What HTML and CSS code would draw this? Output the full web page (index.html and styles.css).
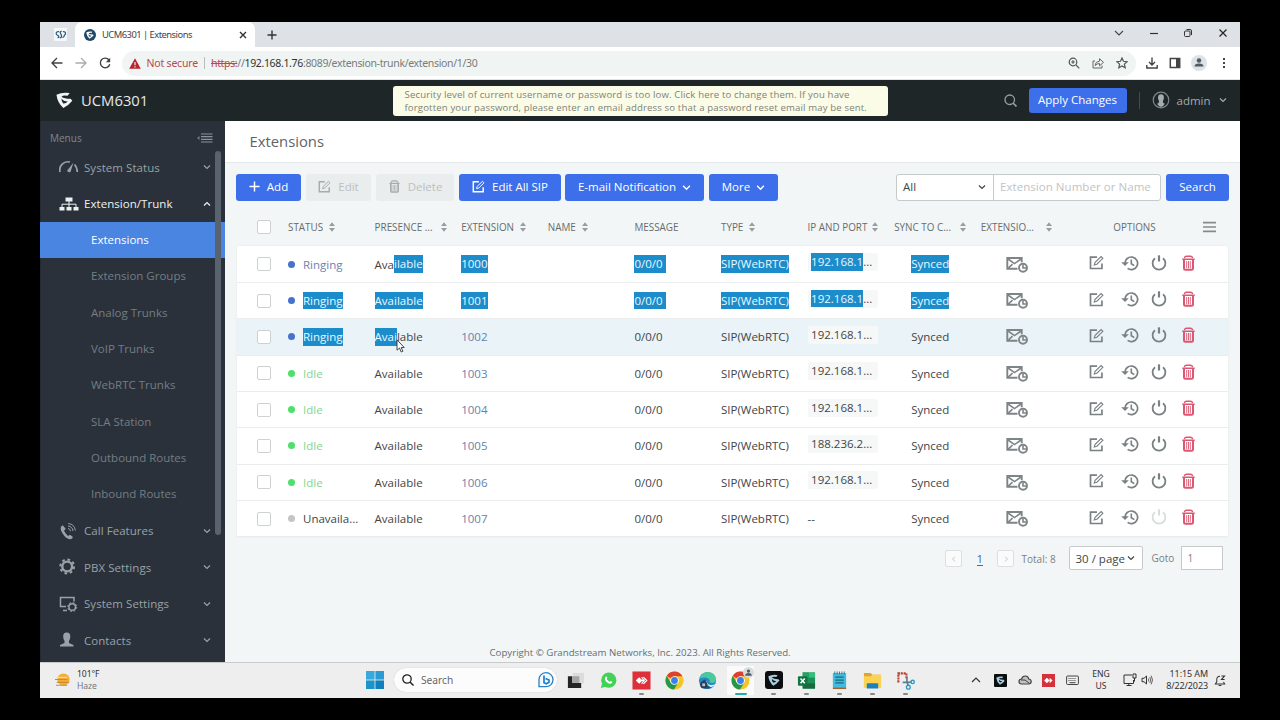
FILE: index.html
```html
<!DOCTYPE html>
<html lang="en">
<head>
<meta charset="utf-8">
<title>UCM6301 | Extensions</title>
<link rel="stylesheet" href="styles.css">
</head>
<body>
<svg class="defs" width="0" height="0">
  <symbol id="edit" viewBox="0 0 16 16"><path d="M8.500 2.200H1.600v12.200h12.200V9" fill="none" stroke="currentColor" stroke-width="1.800"/><path d="M5.600 10.600l.9-2.800 6.400-6.200 1.900 1.900-6.400 6.300z" fill="none" stroke="currentColor" stroke-width="1.200"/></symbol>
  <symbol id="history" viewBox="0 0 18 16"><path d="M4 8.500A6.300 6.300 0 1 1 6.600 13.400" fill="none" stroke="currentColor" stroke-width="1.700"/><path d="M.2 7.300h7.600L4 11z" fill="currentColor"/><path d="M10.300 4.500v4.200l3 2" fill="none" stroke="currentColor" stroke-width="1.600"/></symbol>
  <symbol id="power" viewBox="0 0 16 16"><path d="M4 3.200a6.400 6.400 0 1 0 8 0" fill="none" stroke="currentColor" stroke-width="1.800"/><path d="M8 .3v6.200" stroke="currentColor" stroke-width="2.200"/></symbol>
  <symbol id="trash" viewBox="0 0 13 16"><path d="M.3 4.200h12.400M2.300 3Q3 1.200 4.500 1.200h4Q10 1.200 10.700 3" fill="none" stroke="currentColor" stroke-width="1.500"/><path d="M2 4.500v8.900q0 1.400 1.400 1.400h6.200q1.400 0 1.400-1.400V4.500" fill="none" stroke="currentColor" stroke-width="2"/><path d="M4.700 6v7.300M6.500 6v7.300M8.300 6v7.300" stroke="currentColor" stroke-width=".9"/></symbol>
  <symbol id="mail" viewBox="0 0 22 17"><path d="M11.500 12.800H1.300V2h14.400v4.200" fill="none" stroke="currentColor" stroke-width="1.900"/><path d="M2 3l6.500 4.600L15 3M2 12.300l4.500-4.200" fill="none" stroke="currentColor" stroke-width="1.600"/><circle cx="17" cy="11.800" r="4" fill="none" stroke="currentColor" stroke-width="1.900"/><path d="M17 8.500v3.500h3.300" fill="none" stroke="currentColor" stroke-width="1.600"/></symbol>
  <symbol id="sort" viewBox="0 0 6 10"><path d="M3 .2L6 4H0zM3 9.800L0 6h6z" fill="currentColor"/></symbol>
  <symbol id="down" viewBox="0 0 8 8"><path d="M1 2.500l3 3 3-3" fill="none" stroke="currentColor" stroke-width="1.200"/></symbol>
  <symbol id="gs" viewBox="0 0 18 18"><path fill-rule="evenodd" d="M.5 3.500Q7 .2 14.500 1.700L12.300 4.500Q7.500 3.500 5.800 5.500Q9 7.800 15.500 7.700L17.300 9.800Q12.500 15.500 7.800 17.600Q1.500 12 .5 3.500zM5.800 7.500Q8 10.800 12.500 10.700Q10 13.200 7.700 12.700Q5.500 10.500 5.800 7.500z" fill="currentColor"/></symbol>
  <symbol id="chrome" viewBox="0 0 20 20"><circle cx="10" cy="10" r="9.500" fill="#f5c528"/><path d="M10 10L1.800 5.200A9.500 9.500 0 0 1 18.300 5.500H10z" fill="#dd4132"/><path d="M1.800 5.200A9.500 9.500 0 0 0 9.500 19.500L14 12 6 12z" fill="#24964d"/><circle cx="10" cy="10" r="4.600" fill="#fff"/><circle cx="10" cy="10" r="3.600" fill="#3f7fe8"/></symbol>
</svg>
<div class="desktop">
  <div class="tabs">
    <svg class="pinned" viewBox="0 0 14 14"><rect width="14" height="14" fill="#f4f8fb"/><path d="M5.500 3.800H4.300a2 2 0 0 0-1 3.700l1.400.8q1.300 1.500-1 2.200M8.300 3.300q-2.300.5-1.300 2.400l1 2.200q.6 2.300-1.800 2.600M9.500 3.800h1a2 2 0 0 1 .8 3.800q-.4 2.400-2.300 2.800" fill="none" stroke="#34607f" stroke-width="1.400"/></svg>
    <div class="tab"><span class="fav"><svg viewBox="0 0 18 18"><use href="#gs"/></svg></span><span class="tabname">UCM6301 | Extensions</span><svg class="x" viewBox="0 0 8 8"><path d="M1 1l6 6M7 1L1 7" stroke="#333" stroke-width="1.400"/></svg></div>
    <svg class="plus" viewBox="0 0 10 10"><path d="M5 .5v9M.5 5h9" stroke="#333" stroke-width="1.400"/></svg>
    <div class="win">
      <svg viewBox="0 0 10 10"><path d="M1 3l4 4 4-4" fill="none" stroke="#444" stroke-width="1.100"/></svg>
      <svg viewBox="0 0 10 10"><path d="M1 5.500h8" stroke="#333" stroke-width="1.200"/></svg>
      <svg viewBox="0 0 10 10"><rect x="1.500" y="3" width="5.500" height="5.500" rx="1" fill="none" stroke="#333"/><path d="M3.500 1.500H7q1.500 0 1.500 1.500v4" fill="none" stroke="#333"/></svg>
      <svg viewBox="0 0 10 10"><path d="M1.500 1.500l7 7M8.500 1.500l-7 7" stroke="#222" stroke-width="1.200"/></svg>
    </div>
  </div>
  <div class="nav">
    <svg class="arrow" viewBox="0 0 12 12"><path d="M11.500 6H1.300M6 1L1 6l5 5" fill="none" stroke="#444" stroke-width="1.400"/></svg>
    <svg class="arrow" viewBox="0 0 12 12"><path d="M.5 6h10.200M6 1l5 5-5 5" fill="none" stroke="#a9acad" stroke-width="1.300"/></svg>
    <svg class="arrow" viewBox="0 0 12 12"><path d="M10 3A4.800 4.800 0 1 0 10.800 7.200" fill="none" stroke="#444" stroke-width="1.400"/><path d="M11.200.8v4.400H6.800z" fill="#444"/></svg>
    <div class="omnibox">
      <svg class="warn" viewBox="0 0 12 11"><path d="M6 .3L11.800 10.700H.2z" fill="#b9252c"/><path d="M6 4v3.300M6 8.200v1.300" stroke="#fff" stroke-width="1.100"/></svg>
      <span class="notsec">Not secure</span><i class="bar"></i>
      <span class="url"><s>https:</s>//<b>192.168.1.76</b>:8089/extension-trunk/extension/1/30</span>
      <div class="omniicons">
        <svg viewBox="0 0 12 12"><circle cx="5" cy="5" r="3.800" fill="none" stroke="#555" stroke-width="1.200"/><path d="M8 8l3.300 3.300M3.200 5h3.600M5 3.200v3.600" stroke="#555" stroke-width="1.200"/></svg>
        <svg viewBox="0 0 12 12"><path d="M3 4H1v7h9V8.500M3 8.500Q3.300 4.500 7.500 4.200V1.700l4 3.700-4 3.400V6.500Q5 6.500 3 8.500z" fill="none" stroke="#666"/></svg>
        <svg viewBox="0 0 12 12"><path d="M6 1l1.500 3.300 3.600.4-2.700 2.400.8 3.600L6 8.900l-3.200 1.800.8-3.600L.9 4.700l3.600-.4z" fill="none" stroke="#555" stroke-width="1.200"/></svg>
      </div>
    </div>
    <div class="navright">
      <svg viewBox="0 0 12 12"><path d="M6 .5v7M3 5l3 3 3-3M.8 8v3h10.400V8" fill="none" stroke="#444" stroke-width="1.400"/></svg>
      <svg viewBox="0 0 12 12"><path d="M1.300 1.500h9.400v9H1.300z" fill="none" stroke="#444" stroke-width="1.500"/><path d="M7 1h4v10H7z" fill="#444"/></svg>
      <svg class="user" viewBox="0 0 16 16"><circle cx="8" cy="8" r="8" fill="#dde2e5"/><circle cx="8" cy="5.500" r="2.200" fill="#505b62"/><path d="M3.500 11.500q0-3 4.500-3t4.500 3z" fill="#505b62"/></svg>
      <svg viewBox="0 0 12 12"><path d="M5 1h2v2H5zM5 5h2v2H5zM5 9h2v2H5z" fill="#444"/></svg>
    </div>
  </div>
  <header class="top">
    <svg class="logo"><use href="#gs"/></svg><span class="brand">UCM6301</span>
    <div class="notice"><div>Security level of current username or password is too low. Click here to change them. If you have</div><div>forgotten your password, please enter an email address so that a password reset email may be sent.</div></div>
    <svg class="find" viewBox="0 0 12 12"><circle cx="5.300" cy="5.300" r="4.400" fill="none" stroke="#9a9fa0" stroke-width="1.200"/><path d="M8.500 8.500l3 3" stroke="#9a9fa0" stroke-width="1.500"/></svg>
    <button class="btn apply">Apply Changes</button><i class="split"></i>
    <svg class="avatar" viewBox="0 0 18 18"><circle cx="9" cy="9" r="7.800" fill="none" stroke="#7d868b" stroke-width="1.200"/><path d="M9 3.300q3 0 2.900 3.400 0 1.800-1 3l.3 2.300 1.600.8Q11 16 9 16t-4-3.200l1.700-.8.300-2.300q-1-1.200-1-3Q6 3.300 9 3.300z" fill="#a4adb2"/></svg>
    <span class="admin">admin</span><svg class="chev"><use href="#down"/></svg>
  </header>
  <div class="app">
    <aside>
      <div class="menus"><span>Menus</span><svg viewBox="0 0 16 10"><path d="M4 1h11.500M4 3.600h11.500M4 6.300h11.500M4 9h11.500" stroke="#8a959b" stroke-width="1.200"/><path d="M0 5l2.500-2v4z" fill="#5d86a8"/></svg></div>
      <div class="item"><svg viewBox="0 0 20 16"><path d="M1 13A8.300 8.300 0 0 1 11 3M15.500 5.500q2.500 2.500 2.800 7.500" fill="none" stroke="currentColor" stroke-width="1.700"/><path d="M14.500 3.500L11.500 13q-3 1-3.300-1.500z" fill="currentColor"/></svg><span>System Status</span><svg class="chev"><use href="#down"/></svg></div>
      <div class="item open"><svg viewBox="0 0 20 16"><path d="M6.500 1.500h7v4h-7zM.5 11h5v3.500h-5zM7.500 11h5v3.500h-5zM14.500 11h5v3.500h-5z" fill="currentColor"/><path d="M10 5v6M3 11V8.200h14V11" fill="none" stroke="currentColor"/></svg><span>Extension/Trunk</span><svg class="chev up"><use href="#down"/></svg></div>
      <div class="sub active">Extensions</div>
      <div class="sub">Extension Groups</div>
      <div class="sub">Analog Trunks</div>
      <div class="sub">VoIP Trunks</div>
      <div class="sub">WebRTC Trunks</div>
      <div class="sub">SLA Station</div>
      <div class="sub">Outbound Routes</div>
      <div class="sub">Inbound Routes</div>
      <div class="item"><svg viewBox="0 0 20 18"><path d="M3.800 3.300Q.3 5 2.500 9.500q3 6.500 8 7.800 2.500.3 3.500-2.300l-3-2.300-2 1.300Q6 11.500 5 8.500L6.800 7z" fill="currentColor"/><path d="M9 6.500q2.300.3 2.500 2.700M9 4q4.300.3 5 5M9.300 1.500q6.200.7 7 7" fill="none" stroke="currentColor" stroke-width="1"/></svg><span>Call Features</span><svg class="chev"><use href="#down"/></svg></div>
      <div class="item"><svg viewBox="0 0 20 18"><circle cx="8.200" cy="8.500" r="4.900" fill="none" stroke="currentColor" stroke-width="2.400"/><circle cx="8.200" cy="8.500" r="6.900" fill="none" stroke="currentColor" stroke-width="2" stroke-dasharray="2.700 2.719"/></svg><span>PBX Settings</span><svg class="chev"><use href="#down"/></svg></div>
      <div class="item"><svg viewBox="0 0 20 18"><path d="M7 11.500H1.500V2.500H15v4M4 15.500h4" fill="none" stroke="currentColor" stroke-width="1.500"/><circle cx="13.200" cy="12" r="3.300" fill="none" stroke="currentColor" stroke-width="1.500"/><circle cx="13.200" cy="12" r="4.500" fill="none" stroke="currentColor" stroke-width="1" stroke-dasharray="1.800 1.734"/></svg><span>System Settings</span><svg class="chev"><use href="#down"/></svg></div>
      <div class="item"><svg viewBox="0 0 20 18"><path d="M7.700 1.500q3.800 0 3.600 4.200 0 2.500-1.300 4v2.400l4.500 2v1.400H1v-1.400l4.500-2V9.700q-1.300-1.500-1.300-4Q4 1.500 7.700 1.500z" fill="currentColor"/></svg><span>Contacts</span><svg class="chev"><use href="#down"/></svg></div>
      <i class="thumb"></i>
    </aside>
    <main>
      <h1>Extensions</h1>
      <div class="tools">
        <button class="btn add"><svg viewBox="0 0 12 12"><path d="M6 .5v11M.5 6h11" stroke="#fff" stroke-width="1.600"/></svg>Add</button>
        <button class="btn off edit"><svg><use href="#edit"/></svg>Edit</button>
        <button class="btn off del"><svg><use href="#trash"/></svg>Delete</button>
        <button class="btn all"><svg><use href="#edit"/></svg>Edit All SIP</button>
        <button class="btn mailb">E-mail Notification<svg class="chev"><use href="#down"/></svg></button>
        <button class="btn more">More<svg class="chev"><use href="#down"/></svg></button>
        <div class="filter"><div class="sel">All<svg class="chev"><use href="#down"/></svg></div><div class="inp">Extension Number or Name</div></div>
        <button class="btn go">Search</button>
      </div>
      <div class="row head">
        <span class="cb"></span>
        <span>STATUS<svg class="sort"><use href="#sort"/></svg></span>
        <span>PRESENCE ...<svg class="sort far"><use href="#sort"/></svg></span>
        <span>EXTENSION<svg class="sort"><use href="#sort"/></svg></span>
        <span>NAME<svg class="sort"><use href="#sort"/></svg></span>
        <span>MESSAGE</span>
        <span>TYPE<svg class="sort"><use href="#sort"/></svg></span>
        <span>IP AND PORT<svg class="sort near"><use href="#sort"/></svg></span>
        <span>SYNC TO C...<svg class="sort far"><use href="#sort"/></svg></span>
        <span>EXTENSIO...<svg class="sort wide"><use href="#sort"/></svg></span>
        <span class="opt">OPTIONS<svg viewBox="0 0 12 11"><path d="M0 1.500h12M0 5.500h12M0 9.500h12" stroke="#858b8d" stroke-width="1.500"/></svg></span>
      </div>
      <div class="table">
        <div class="row"><span class="cb"></span><span class="st ring"><i></i>Ringing</span><span>Ava<mark>ilable</mark></span><span class="ext"><mark>1000</mark></span><span></span><span><mark class="msg">0/0/0</mark></span><span><mark>SIP(WebRTC)</mark></span><span><em><mark>192.168.1</mark>...</em></span><span class="sync"><mark>Synced</mark></span><span class="ml"><svg><use href="#mail"/></svg></span><span class="acts"><svg><use href="#edit"/></svg><svg><use href="#history"/></svg><svg><use href="#power"/></svg><svg><use href="#trash"/></svg></span></div>
        <div class="row"><span class="cb"></span><span class="st ring"><i></i><mark>Ringing</mark></span><span><mark>Available</mark></span><span class="ext"><mark>1001</mark></span><span></span><span><mark class="msg">0/0/0</mark></span><span><mark>SIP(WebRTC)</mark></span><span><em><mark>192.168.1</mark>...</em></span><span class="sync"><mark>Synced</mark></span><span class="ml"><svg><use href="#mail"/></svg></span><span class="acts"><svg><use href="#edit"/></svg><svg><use href="#history"/></svg><svg><use href="#power"/></svg><svg><use href="#trash"/></svg></span></div>
        <div class="row hover"><span class="cb"></span><span class="st ring"><i></i><mark>Ringing</mark></span><span><mark>Avai</mark>lable</span><span class="ext">1002</span><span></span><span>0/0/0</span><span>SIP(WebRTC)</span><span><em>192.168.1...</em></span><span class="sync">Synced</span><span class="ml"><svg><use href="#mail"/></svg></span><span class="acts"><svg><use href="#edit"/></svg><svg><use href="#history"/></svg><svg><use href="#power"/></svg><svg><use href="#trash"/></svg></span></div>
        <div class="row"><span class="cb"></span><span class="st idle"><i></i>Idle</span><span>Available</span><span class="ext">1003</span><span></span><span>0/0/0</span><span>SIP(WebRTC)</span><span><em>192.168.1...</em></span><span class="sync">Synced</span><span class="ml"><svg><use href="#mail"/></svg></span><span class="acts"><svg><use href="#edit"/></svg><svg><use href="#history"/></svg><svg><use href="#power"/></svg><svg><use href="#trash"/></svg></span></div>
        <div class="row"><span class="cb"></span><span class="st idle"><i></i>Idle</span><span>Available</span><span class="ext">1004</span><span></span><span>0/0/0</span><span>SIP(WebRTC)</span><span><em>192.168.1...</em></span><span class="sync">Synced</span><span class="ml"><svg><use href="#mail"/></svg></span><span class="acts"><svg><use href="#edit"/></svg><svg><use href="#history"/></svg><svg><use href="#power"/></svg><svg><use href="#trash"/></svg></span></div>
        <div class="row"><span class="cb"></span><span class="st idle"><i></i>Idle</span><span>Available</span><span class="ext">1005</span><span></span><span>0/0/0</span><span>SIP(WebRTC)</span><span><em>188.236.2...</em></span><span class="sync">Synced</span><span class="ml"><svg><use href="#mail"/></svg></span><span class="acts"><svg><use href="#edit"/></svg><svg><use href="#history"/></svg><svg><use href="#power"/></svg><svg><use href="#trash"/></svg></span></div>
        <div class="row"><span class="cb"></span><span class="st idle"><i></i>Idle</span><span>Available</span><span class="ext">1006</span><span></span><span>0/0/0</span><span>SIP(WebRTC)</span><span><em>192.168.1...</em></span><span class="sync">Synced</span><span class="ml"><svg><use href="#mail"/></svg></span><span class="acts"><svg><use href="#edit"/></svg><svg><use href="#history"/></svg><svg><use href="#power"/></svg><svg><use href="#trash"/></svg></span></div>
        <div class="row"><span class="cb"></span><span class="st un"><i></i>Unavaila...</span><span>Available</span><span class="ext">1007</span><span></span><span>0/0/0</span><span>SIP(WebRTC)</span><span class="none">--</span><span class="sync">Synced</span><span class="ml"><svg><use href="#mail"/></svg></span><span class="acts"><svg><use href="#edit"/></svg><svg><use href="#history"/></svg><svg class="dim"><use href="#power"/></svg><svg><use href="#trash"/></svg></span></div>
      </div>
      <div class="pager">
        <span class="pg"><svg viewBox="0 0 8 8"><path d="M5 1.500L2.500 4 5 6.500" fill="none" stroke="#c6cbcc"/></svg></span><span class="cur">1</span><span class="pg"><svg viewBox="0 0 8 8"><path d="M3 1.500L5.500 4 3 6.500" fill="none" stroke="#c6cbcc"/></svg></span><span class="total">Total: 8</span><span class="size">30 / page<svg class="chev"><use href="#down"/></svg></span><span class="goto">Goto</span><span class="num">1</span>
      </div>
      <footer>Copyright © Grandstream Networks, Inc. 2023. All Rights Reserved.</footer>
    </main>
  </div>
  <div class="taskbar">
    <div class="weather"><svg viewBox="0 0 18 16"><circle cx="10" cy="7.500" r="6.500" fill="#f3ae35"/><path d="M1 7.500h13M3 10.500h13M2 13.500h12" stroke="#c98a3c" stroke-width="1.200"/><path d="M2 5.200h12" stroke="#fae3aa"/></svg><div>101°F<br><span>Haze</span></div></div>
    <svg class="start" viewBox="0 0 18 18"><path d="M0 0h8.600v8.600H0z" fill="#38a9dc"/><path d="M9.400 0H18v8.600H9.400z" fill="#2b9cd2"/><path d="M0 9.400h8.600V18H0z" fill="#1d93cb"/><path d="M9.400 9.400H18V18H9.400z" fill="#0f80bd"/></svg>
    <div class="search"><svg viewBox="0 0 12 12"><circle cx="5" cy="5" r="4.200" fill="none" stroke="#222" stroke-width="1.300"/><path d="M8 8l3.500 3.500" stroke="#222" stroke-width="1.500"/></svg><span>Search</span><svg class="bing" viewBox="0 0 16 16"><path d="M1 14.500V8a7 7 0 1 1 7 6.700z" fill="#f3fbff" stroke="#2c7fc0" stroke-width="1.300"/><path d="M6 3.500v7.300l2.300 1 2.700-1.500V8L7.500 6.500" fill="none" stroke="#1a80cf" stroke-width="1.700"/></svg></div>
    <div class="apps">
      <span><svg viewBox="0 0 20 20"><path d="M7 2h12v11H7z" fill="#dcdcdc"/><path d="M2 5.500h4.500v7H16V18H2z" fill="#242424"/><path d="M6.500 5.500H14v7H6.500z" fill="#a5a5a5"/></svg></span>
      <span><svg viewBox="0 0 20 20"><circle cx="10.300" cy="9.700" r="8" fill="#43d157"/><path d="M2 18l1.300-5L7 16.700z" fill="#43d157"/><path d="M6.500 6.500q1.500-1.700 2.300.7l-.6 1.400q1.200 2 3.200 2.800l1.200-1q2.300.8 1 2.200-1.800 1.700-5-.6-3.400-2.800-2.100-5.500z" fill="#fff"/></svg></span>
      <span class="run"><svg viewBox="0 0 20 20"><path d="M.5.5h19v19H.5z" fill="#dc303b"/><path d="M4 10l3.500-3.500L11 10l-3.500 3.500z" fill="#fff"/><path d="M10 6.700l1.500 1.500M10 13.300l1.500-1.500M12 6.500l3.500 3.500-3.500 3.500" fill="none" stroke="#fff" stroke-width="1.300"/><circle cx="12" cy="10" r="1.500" fill="#fff"/></svg></span>
      <span><svg><use href="#chrome"/></svg></span>
      <span><svg viewBox="0 0 20 20"><circle cx="10" cy="10" r="9" fill="#2487c8"/><path d="M1.500 8Q4 1 11 1q7.500 1 8 8-.5 4-5 3.500-3-.5-1.500-2.500Q10 5 1.500 8z" fill="#4cc99a"/><path d="M8.500 9q-2.500 5 3 7.500l4-.5q-6 5-11.500.5Q2 10 8.500 9z" fill="#164f86"/><path d="M9.500 9.500q-1 4.500 4 5.500l5-1q-2 3-5 3Q7.500 14 9.500 9.500z" fill="#e5f6fa"/><circle cx="6" cy="14.500" r="3.800" fill="#273f50"/><path d="M4.500 13h3v3h-3z" fill="#b9c2ca"/></svg></span>
      <span class="run on"><svg><use href="#chrome"/></svg><svg class="badge" viewBox="0 0 10 10"><circle cx="5" cy="5" r="5" fill="#d7dcdf"/><circle cx="5" cy="3.700" r="1.500" fill="#525e65"/><path d="M2 8q0-2.500 3-2.500T8 8z" fill="#525e65"/></svg></span>
      <span class="run"><i class="gsbox"><svg viewBox="0 0 18 18"><use href="#gs"/></svg></i></span>
      <span class="run"><svg viewBox="0 0 20 20"><path d="M6 1.500h13v17H6z" fill="#1c9157"/><path d="M12.500 1.500H19V7h-6.500z" fill="#38bd7c"/><path d="M6 1.500h6.500V7H6z" fill="#24a366"/><path d="M6 13h13v5.500H6z" fill="#176a3e"/><rect x="1" y="5.500" width="10" height="10" rx="1" fill="#117542"/><path d="M3.700 8l4.500 5M8.200 8l-4.500 5" stroke="#fff" stroke-width="1.600"/></svg></span>
      <span class="run"><svg viewBox="0 0 20 20"><rect x="3" y="2" width="14" height="16" rx="1" fill="#42bbdd"/><path d="M3 17.500h14v1.500H3z" fill="#9c6532"/><path d="M5.500 6.500h9M5.500 9.500h9M5.500 12.500h9" stroke="#176986" stroke-width="1.300"/><path d="M5 .5v3M7.500.5v3M10 .5v3M12.500.5v3M15 .5v3" stroke="#287d99" stroke-width="1"/></svg></span>
      <span class="run"><svg viewBox="0 0 20 20"><path d="M1 2h7l2 2h9v13H1z" fill="#e0a52c"/><path d="M1 5.500h7l2-1.500h9v13.500H1z" fill="#fbd252"/><path d="M4 18.500V14q0-1 1-1h10q1 0 1 1v4.500z" fill="#1f7fbd"/></svg></span>
      <span class="run"><svg viewBox="0 0 20 20"><path d="M2.500 12V2.500H11V8" fill="none" stroke="#b63f30" stroke-width="2.200" stroke-dasharray="2.200 .8"/><path d="M11.500 6v6l1.500 3M7 12h6l3.500-.5" fill="none" stroke="#607b89" stroke-width="1.700"/><circle cx="17.500" cy="11.500" r="1.800" fill="none" stroke="#2a9bc6" stroke-width="1.400"/><circle cx="13" cy="17" r="2" fill="none" stroke="#2a9bc6" stroke-width="1.400"/></svg></span>
    </div>
    <div class="tray">
      <svg class="t1" viewBox="0 0 10 10"><path d="M1 7l4-4 4 4" fill="none" stroke="#333" stroke-width="1.200"/></svg>
      <i class="gsbox small"><svg viewBox="0 0 18 18"><use href="#gs"/></svg></i>
      <svg class="t2" viewBox="0 0 14 12"><path d="M3.500 10Q1 10 1 7.500T3.500 5Q4.500 1.800 7.500 2q2.800.3 3.200 3 2.500.3 2.500 2.600T10.700 10z" fill="#bfc2c3" stroke="#444" stroke-width="1.200"/><path d="M3 6q4-1.500 8 3" fill="none" stroke="#444"/></svg>
      <svg class="t3" viewBox="0 0 12 12"><path d="M0 0h12v12H0z" fill="#d4313a"/><path d="M2 6l2.500-2.500L7 6 4.500 8.500zM7 3.500L9.800 6 7 8.500z" fill="#fff"/></svg>
      <svg class="t4" viewBox="0 0 13 11"><rect x=".6" y="1" width="11.800" height="8.500" rx="1" fill="none" stroke="#444"/><path d="M2.500 3.500h8M2.500 5.500h8" stroke="#444" stroke-dasharray="1 1"/><path d="M3.500 7.700h6" stroke="#444"/></svg>
      <div class="lang">ENG<br>US</div>
      <svg class="t5" viewBox="0 0 14 14"><path d="M9 2H1v8.500h9.500V7M3.500 12.500h5M5.800 10.500v2M10 1h3v4h-3zM11.500 5v3.500" fill="none" stroke="#333"/></svg>
      <svg class="t6" viewBox="0 0 12 12"><path d="M1 4.300h2L5.500 2v8L3 7.700H1z" fill="none" stroke="#333"/><path d="M7.300 4.500q1 1.500 0 3M8.800 3q2 3 0 6M10.200 1.700q2.600 4.300 0 8.600" fill="none" stroke="#555" stroke-width=".9"/></svg>
      <div class="clock">11:15 AM<br>8/22/2023</div>
      <svg class="t7" viewBox="0 0 13 13"><path d="M6.500 2Q3 2 3 5.500V8L1.500 10.200h10L10.300 8M5 12h3" fill="none" stroke="#333" stroke-width="1.100"/><path d="M8 1.500h3.500L8 5.500h3.500" fill="none" stroke="#333" stroke-width="1.100"/></svg>
    </div>
  </div>
  <svg class="cursor" viewBox="0 0 9 14"><path d="M1 .8v10.400l2.500-2.200 1.700 4 1.700-.8-1.700-3.700h3z" fill="#fff" stroke="#333" stroke-width=".9"/></svg>
</div>
</body>
</html>
```
FILE: styles.css
```css
* { box-sizing: border-box; }
body { margin: 0; background: #000; font-family: "Open Sans", "Noto Sans", sans-serif; font-size: 11.5px; color: #3f4547; }
svg { flex: none; display: block; }
.defs { position: absolute; }
.desktop { position: relative; width: 1200px; height: 676px; margin: 22px 40px; display: flex; flex-direction: column; background: #fff; overflow: hidden; white-space: nowrap; }
.chev { width: 8px; height: 8px; }
.up { transform: rotate(180deg); }

.tabs { height: 25px; background: #dee2e6; display: flex; align-items: center; font-size: 10px; }
.pinned { width: 13px; height: 13px; margin: 0 8px 0 14px; }
.tab { width: 180px; height: 25px; background: #fff; border-radius: 7px 7px 0 0; display: flex; align-items: center; padding: 0 8px 0 9px; }
.fav { width: 12px; height: 12px; border-radius: 6px; background: #1f4866; color: #fff; padding: 2px; margin-right: 6px; }
.fav svg { width: 8px; height: 8px; }
.tabname { font-family: "Noto Sans", sans-serif; font-size: 9.400px; letter-spacing: -.520px; flex: 1; }
.x { width: 8px; height: 8px; }
.plus { width: 10px; height: 10px; margin-left: 12px; }
.win { margin-left: auto; display: flex; gap: 24.500px; padding: 0 12.500px 3px 0; }
.win svg { width: 10px; height: 10px; }

.nav { height: 33px; display: flex; align-items: center; padding-left: 10.500px; background: #fff; border-bottom: 1px solid #dfe3e4; }
.arrow { width: 12px; height: 12px; margin-right: 12px; }
.omnibox { width: 1014px; height: 25px; margin-left: -1px; border-radius: 13px; background: #f0f4f2; display: flex; align-items: center; padding: 0 8px 0 7px; font-family: "Noto Sans", sans-serif; font-size: 10.500px; color: #777c7c; }
.warn { width: 12px; height: 11px; margin-right: 6px; }
.notsec { color: #b9494b; width: 50px; letter-spacing: -.200px; }
.bar { width: 1px; height: 12px; background: #b8bcbc; margin: 0 6.500px 0 7px; }
.url { letter-spacing: -.340px; }
.url b { font-weight: 400; color: #333; }
.url s { color: #b9494b; }
.omniicons { margin-left: auto; display: flex; gap: 12px; }
.omniicons svg { width: 12px; height: 12px; }
.navright { display: flex; align-items: center; gap: 10.500px; margin-left: 10.500px; }
.navright svg { width: 12px; height: 12px; }
.navright .user { width: 16px; height: 16px; }

.top { height: 41px; background: #1f2628; display: flex; align-items: center; color: #a5abad; padding-bottom: 1px; }
.logo { width: 17px; height: 18px; margin: 0 8px 0 16px; color: #f2f5f5; }
.brand { font-size: 14.800px; color: #e4e8e8; width: 311.500px; padding-bottom: 1px; }
.notice { width: 495px; height: 30px; border-radius: 3px; background: #fbfce7; color: #7e8279; padding: 2px 12px; font-size: 9.600px; letter-spacing: .142px; line-height: 13.300px; position: relative; top: .5px; }
.find { width: 13px; height: 13px; margin-left: 116px; }
.btn { border: 0; border-radius: 3px; background: #3d6fea; color: #fff; font: 500 11.500px "Open Sans", sans-serif; height: 27px; padding: 0 0 1px; display: flex; align-items: center; justify-content: center; }
.apply { width: 98px; height: 25px; margin-left: 12px; }
.split { width: 1px; height: 17px; background: #454c4f; margin: 0 12px; }
.avatar { width: 18px; height: 18px; }
.admin { margin: 0 7px 0 7px; width: 35px; }

.app { height: 541px; display: flex; overflow: hidden; }
aside { width: 184.500px; background: #2b313a; position: relative; color: #98a2a8; flex: none; border-left: 1px solid #242a31; }
.menus { height: 28.200px; padding: 5px 10px 0 9px; display: flex; align-items: center; justify-content: space-between; font-size: 10px; color: #7e888e; }
.menus svg { width: 16px; height: 10px; margin-right: 1.500px; }
.item { height: 36.370px; display: flex; align-items: center; padding: 0 13.500px 0 18px; }
.item > svg:first-child { width: 20px; height: 18px; margin-right: 5px; }
.item > span { flex: 1; letter-spacing: .050px; }
.open { color: #eef1f2; }
.sub { height: 36.370px; line-height: 36.370px; padding-left: 50px; color: #727e84; }
.active { background: #4b85e2; color: #fff; margin-left: -1px; padding-left: 51px; }
.thumb { position: absolute; right: 3.500px; top: 30px; width: 6.500px; height: 384px; border-radius: 3px; background: #59626f; }

main { flex: 1; background: #f2f6f7; display: flex; flex-direction: column; }
h1 { margin: 0; height: 41.500px; line-height: 40px; padding-left: 25px; font-size: 14.800px; font-weight: 400; color: #5e6467; background: #fff; border-bottom: 1px solid #e5e8e9; }
.tools { display: flex; height: 27px; margin: 11px 11px 7px 11.500px; }
.btn svg { width: 13px; height: 13px; margin-right: 7px; }
.btn .chev { width: 9px; height: 9px; margin: 1px 0 0 6px; }
.btn.add svg { width: 11px; height: 11px; }
.add { width: 65px; margin-right: 5px; }
.off { background: #e9edee; color: #bcc0c1; }
.off svg { color: #a7abac; }
.edit { width: 65px; margin-right: 5px; }
.del { width: 78px; margin-right: 5px; }
.all { width: 102px; margin-right: 4px; }
.mailb { width: 139px; margin-right: 5px; }
.more { width: 69px; }
.filter { margin-left: auto; display: flex; border: 1px solid #c5cacb; border-radius: 3px; background: #fff; line-height: 24px; width: 265px; margin-right: 5px; }
.sel { width: 97px; border-right: 1px solid #c5cacb; padding: 0 7px 0 6px; display: flex; align-items: center; justify-content: space-between; }
.inp { padding-left: 6px; color: #c0c4c6; letter-spacing: .050px; }
.go { width: 63px; }
.row { display: grid; grid-template-columns: 51.500px repeat(9, 86.600px) 1fr; align-items: center; height: 36.370px; }
.row > span { display: flex; align-items: center; }
.head { height: 38.500px; margin: 0 12px; font-size: 9.900px; color: #666c6e; }
.sort { width: 6px; height: 10px; color: #989d9e; margin-left: 6px; }
.near { margin-left: 5px; }
.far { margin-left: 8.500px; }
.wide { margin-left: 12px; }
.row > .cb { width: 14px; height: 14px; border: 1px solid #cdd1d2; border-radius: 2px; background: #fff; margin-left: 20px; }
.row > .opt { padding-left: 46px; }
.opt svg { width: 13px; height: 12px; margin-left: 47px; }
.table { margin: 0 12px; background: #fff; border-radius: 2px; box-shadow: 0 0 2px #dfe4e5; padding-top: .5px; }
.table .row { border-bottom: 1px solid #e9edee; }
.table .row.hover { background: #e9f3f8; }
.st i { width: 7px; height: 7px; border-radius: 50%; margin-right: 8px; background: #4472cf; }
.ring { color: #6d82ae; }
.idle { color: #83d58f; }
.idle i { background: #4de06b; }
.un i { background: #c3c5c6; }
.ext { color: #6a80ab; }
mark { background: #1c8ccb; color: #e9f8ff; line-height: 17px; height: 17.500px; }
.msg { padding-right: 3px; }
em { font-style: normal; background: #f6f7f7; border-radius: 2px; height: 18px; line-height: 17px; width: 70px; padding-left: 3.500px; margin-top: -4px; display: flex; }
.row > .none { padding-left: 0; }
.row > .sync { padding-left: 17px; }
.row > .ml { padding-left: 25px; color: #7e8587; }
.ml svg { width: 22px; height: 17px; }
.acts { color: #7a8183; padding: 0 0 3px 22px; }
.acts svg { width: 15px; height: 15px; }
.acts svg:nth-child(2) { width: 18px; height: 16px; margin-left: 16.500px; }
.acts svg:nth-child(3) { width: 16px; height: 16px; margin-left: 12px; }
.acts svg:nth-child(4) { width: 13px; height: 16px; margin-left: 15.500px; color: #dc5772; }
.acts .dim { color: #d8dcdd; }
.pager { display: flex; align-items: center; justify-content: flex-end; height: 24px; margin: 9px 17.500px 0 0; font-size: 10px; color: #7b8183; }
.pg { width: 17px; height: 17px; border: 1px solid #dce0e1; background: #fafbfb; border-radius: 2px; padding: 4px; margin-top: 1px; }
.pg svg { width: 8px; height: 8px; }
.cur { margin: 2px 14px 0 15px; width: 6px; color: #4466ab; border-bottom: 1px solid #4466ab; font-size: 11.500px; line-height: 13px; }
.total { margin: 2px 12px 0 8px; width: 35px; }
.size { width: 74px; height: 24px; border: 1px solid #c5cacb; border-radius: 2px; background: #fff; font-size: 11.500px; color: #3f4547; display: flex; align-items: center; padding-left: 6px; }
.size .chev { margin-left: 2px; }
.goto { margin: 0 6px 0 9px; width: 23px; }
.num { width: 42px; height: 24px; border: 1px solid #c5cacb; background: #fff; line-height: 22px; padding-left: 6px; }
footer { margin-top: auto; padding-bottom: 1px; margin-left: 265px; font-size: 9.700px; line-height: 16px; color: #686e70; }

.taskbar { height: 36px; border-top: 1px solid #c7cbcc; background: #eeeeef; display: flex; align-items: center; font-family: "Noto Sans", sans-serif; font-size: 9px; line-height: 12px; color: #333; padding-bottom: 1px; }
.weather { display: flex; align-items: center; gap: 6px; padding-left: 14px; width: 326px; font-size: 8.600px; letter-spacing: -.100px; }
.weather svg { width: 17px; height: 16px; }
.weather span { color: #777; }
.start { width: 18px; height: 18px; }
.search { margin-left: 10px; width: 163px; height: 24px; border-radius: 12px; background: #fcfcfc; box-shadow: 0 0 1px #bbb; display: flex; align-items: center; padding: 0 3px 0 8px; font-size: 10.200px; color: #686868; }
.search svg { width: 12px; height: 12px; margin-right: 7px; }
.search span { flex: 1; }
.search .bing { width: 16px; height: 16px; margin: 0; }
.apps { display: flex; margin-left: 1.500px; }
.apps span { width: 33.100px; height: 35px; display: flex; align-items: center; justify-content: center; position: relative; }
.apps svg { width: 19px; height: 19px; }
.apps .run::after { content: ""; position: absolute; bottom: 3px; width: 5px; height: 2px; border-radius: 1px; background: #888; }
.apps .run.on::after { width: 12px; background: #28aba0; }
.apps .on { background: linear-gradient(#fafafa, #fafafa) center / 27px 29px no-repeat; }
.apps .badge { position: absolute; top: 4px; right: 3px; width: 11px; height: 11px; }
.gsbox { width: 18px; height: 18px; border-radius: 3px; background: #0b0d0e; color: #a9cfdf; display: flex; align-items: center; justify-content: center; flex: none; }
.gsbox svg, .apps .gsbox svg { width: 12px; height: 12px; }
.tray { display: flex; align-items: center; margin-left: auto; padding-right: 14.500px; }
.t1 { width: 10px; height: 10px; margin-right: 13px; }
.small { width: 13px; height: 13px; border-radius: 1px; }
.gsbox.small svg { width: 9px; height: 9px; }
.t2 { width: 14px; height: 12px; margin: 0 10px 0 11px; }
.t3 { width: 13px; height: 13px; }
.t4 { width: 13px; height: 11px; margin-left: 11px; }
.lang { width: 18px; text-align: center; margin: 0 13px; font-size: 8.600px; }
.t5 { width: 14px; height: 14px; }
.t6 { width: 12px; height: 12px; margin-left: 4px; }
.clock { width: 55px; text-align: right; margin-right: 5.500px; letter-spacing: -.100px; }
.t7 { width: 12px; height: 13px; }
.cursor { position: absolute; left: 356px; top: 317px; width: 9px; height: 14px; }
```
